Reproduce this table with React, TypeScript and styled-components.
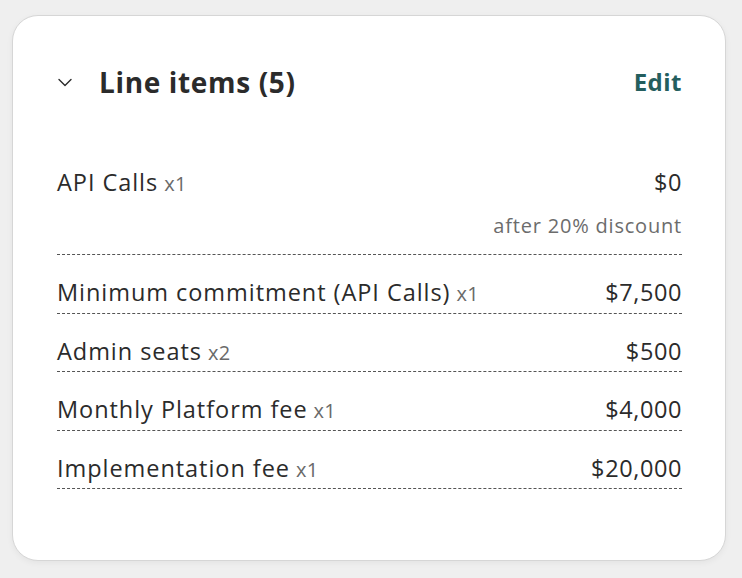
import React from "react";
import styled, { createGlobalStyle } from "styled-components";

const Global = createGlobalStyle`
  html, body { margin: 0; padding: 0; background: #efefef; }
  body { font-family: "Open Sans", "Inter", sans-serif; color: #2a2a2a; }
`;

const Page = styled.div`
  padding: 15px 16px 17px 12px;
`;

const Card = styled.section`
  box-sizing: border-box;
  width: 714px;
  height: 546px;
  background: #fff;
  border: 1px solid #d6d6d6;
  border-radius: 26px;
  box-shadow: 0 2px 6px rgba(0, 0, 0, 0.05);
  padding: 50px 43px 0 44px;
`;

const Header = styled.header`
  display: flex;
  align-items: center;
  justify-content: space-between;
  height: 32px;
`;

const TitleGroup = styled.div`
  display: flex;
  align-items: center;
  gap: 22px;
`;

const Chevron = styled.svg`
  width: 24px;
  height: 24px;
  margin-left: -4px;
  margin-top: -1px;
  flex: none;
`;

const Title = styled.h2`
  margin: 0;
  font-size: 28px;
  line-height: 32px;
  font-weight: 700;
  letter-spacing: 0.65px;
  color: #2b2b2b;
`;

const EditButton = styled.button`
  border: 0;
  background: none;
  padding: 0;
  font-family: inherit;
  font-size: 24px;
  line-height: 32px;
  font-weight: 700;
  letter-spacing: 0.5px;
  color: #245e5e;
  cursor: pointer;
`;

const List = styled.div`
  margin-top: 49px;
  display: flex;
  flex-direction: column;
`;

const Row = styled.div`
  border-bottom: 1px dashed #555;
  padding: 24px 0 5.5px;
`;

const FirstRow = styled(Row)`
  padding: 22px 0 16px;
`;

const Line = styled.div`
  display: flex;
  justify-content: space-between;
  align-items: center;
  font-size: 23.5px;
  line-height: 28px;
  height: 28px;
  letter-spacing: 0.95px;
  margin-top: -1px;
  margin-bottom: 1px;
`;

const Name = styled.span`
  color: #2b2b2b;
`;

const Qty = styled.span`
  font-size: 20px;
  line-height: 1;
  color: #6a6a6a;
  margin-left: 6px;
  letter-spacing: 0.3px;
`;

const Amount = styled.span`
  color: #2b2b2b;
  letter-spacing: 0.6px;
`;

const Note = styled.div`
  margin-top: 18px;
  text-align: right;
  font-size: 20px;
  line-height: 24px;
  color: #6c6c6c;
  letter-spacing: 0.8px;
`;

type Item = { name: string; qty: string; amount: string; note?: string };

const items: Item[] = [
  { name: "API Calls", qty: "x1", amount: "$0", note: "after 20% discount" },
  { name: "Minimum commitment (API Calls)", qty: "x1", amount: "$7,500" },
  { name: "Admin seats", qty: "x2", amount: "$500" },
  { name: "Monthly Platform fee", qty: "x1", amount: "$4,000" },
  { name: "Implementation fee", qty: "x1", amount: "$20,000" },
];

export default function App() {
  return (
    <>
      <Global />
      <Page>
        <Card>
          <Header>
            <TitleGroup>
              <Chevron viewBox="0 0 24 24" fill="none" stroke="#2b2b2b" strokeWidth="1.4" strokeLinecap="round" strokeLinejoin="round">
                <path d="M6 9.5l6 6 6-6" />
              </Chevron>
              <Title>Line items (5)</Title>
            </TitleGroup>
            <EditButton>Edit</EditButton>
          </Header>
          <List>
            {items.map((it, i) => {
              const R = i === 0 ? FirstRow : Row;
              return (
                <R key={it.name}>
                  <Line>
                    <Name>
                      {it.name}
                      <Qty>{it.qty}</Qty>
                    </Name>
                    <Amount>{it.amount}</Amount>
                  </Line>
                  {it.note && <Note>{it.note}</Note>}
                </R>
              );
            })}
          </List>
        </Card>
      </Page>
    </>
  );
}
